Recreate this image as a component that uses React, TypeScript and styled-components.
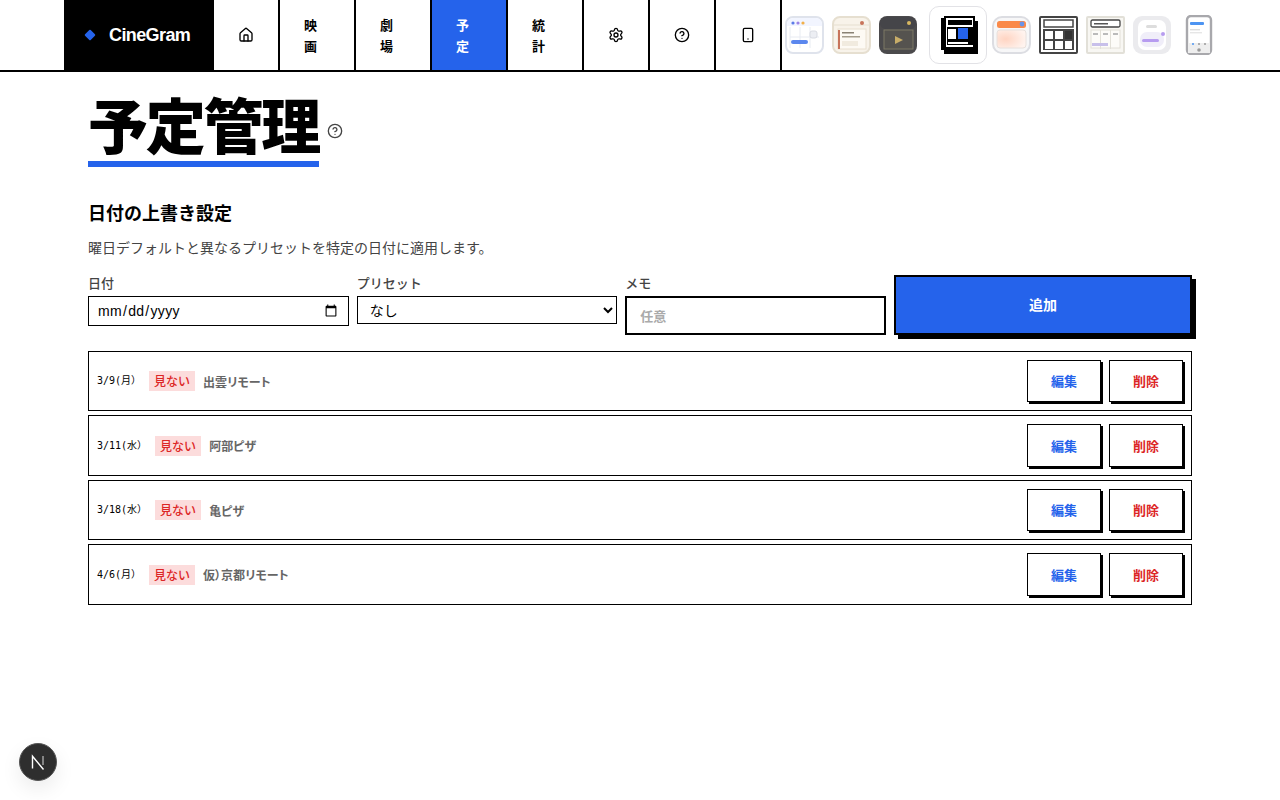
import React from "react";
import styled, { createGlobalStyle } from "styled-components";
import { House, Settings, CircleHelp, Smartphone } from "lucide-react";

const Global = createGlobalStyle`
  * { box-sizing: border-box; }
  html, body { margin: 0; padding: 0; background: #fff; }
  body { font-family: "Liberation Sans", "Noto Sans CJK JP", sans-serif; color: #000; }
`;

const Page = styled.div`
  width: 1280px;
  height: 800px;
  overflow: hidden;
  position: relative;
`;

const Header = styled.header`
  height: 72px;
  border-bottom: 2px solid #000;
`;

const HeaderInner = styled.div`
  width: 1152px;
  height: 70px;
  margin: 0 auto;
  display: flex;
`;

const Logo = styled.div`
  flex: none;
  width: 150px;
  background: #000;
  color: #fff;
  display: flex;
  align-items: center;
  padding-left: 22px;
  gap: 15px;
  font-size: 18px;
  font-weight: 700;
  letter-spacing: -0.6px;
`;

const Diamond = styled.span`
  width: 8px;
  height: 8px;
  background: #2563eb;
  transform: rotate(45deg);
  border-radius: 1px;
`;

const NavItem = styled.a<{ $active?: boolean; $icon?: boolean }>`
  flex: none;
  display: flex;
  align-items: center;
  padding: 0 24px;
  border-right: 2px solid #000;
  font-family: "Noto Sans CJK JP", sans-serif;
  font-size: 13px;
  font-weight: 700;
  line-height: 21px;
  letter-spacing: 0.65px;
  background: ${(p) => (p.$active ? "#2563eb" : "#fff")};
  color: ${(p) => (p.$active ? "#fff" : "#000")};
  width: ${(p) => (p.$icon ? "66px" : "76px")};
`;

const Themes = styled.div`
  flex: none;
  display: flex;
  align-items: center;
  padding-left: 3px;
`;

const ThemeSlot = styled.div<{ $active?: boolean }>`
  flex: none;
  width: ${(p) => (p.$active ? "58px" : "40px")};
  height: ${(p) => (p.$active ? "58px" : "40px")};
  margin: ${(p) => (p.$active ? "0 5px 0 3px" : "0 7px 0 0")};
  display: flex;
  align-items: center;
  justify-content: center;
  border-radius: 10px;
  border: ${(p) => (p.$active ? "1px solid #e2e2e6" : "none")};
`;

const Main = styled.main`
  width: 1104px;
  margin: 0 auto;
  padding-top: 20px;
`;

const TitleRow = styled.div`
  display: flex;
  align-items: center;
  gap: 8px;
  margin-bottom: 31px;
  color: #444;
`;

const Title = styled.h1`
  margin: 0;
  padding-bottom: 8px;
  font-family: "Noto Sans CJK JP", sans-serif;
  font-weight: 900;
  font-size: 60px;
  line-height: 61px;
  letter-spacing: -2.25px;
  color: #000;
  border-bottom: 6px solid #2563eb;
`;

const TitleHelp = styled(CircleHelp)`
  margin-top: 3px;
`;

const SectionTitle = styled.h2`
  margin: 0 0 11px;
  font-family: "Noto Sans CJK JP", sans-serif;
  font-size: 18px;
  font-weight: 700;
  line-height: 28px;
`;

const Description = styled.p`
  margin: 0 0 17px;
  font-family: "Noto Sans CJK JP", sans-serif;
  font-size: 14px;
  line-height: 20px;
  color: #444;
`;

const FormGrid = styled.div`
  display: grid;
  grid-template-columns: repeat(3, 1fr) 298px;
  gap: 8px;
  align-items: start;
  margin-bottom: 15.75px;
`;

const Field = styled.label`
  display: flex;
  flex-direction: column;
  gap: 5px;
`;

const FieldLabel = styled.span`
  font-family: "Noto Sans CJK JP", sans-serif;
  font-size: 13px;
  font-weight: 500;
  line-height: 17px;
  color: #444;
`;

const DateInput = styled.input`
  height: 30px;
  width: 100%;
  padding: 0 8px;
  border: 1px solid #000;
  border-radius: 0;
  background: #fff;
  font-family: "Liberation Sans", sans-serif;
  font-size: 14px;
  letter-spacing: 0.3px;
  color: #000;
`;

const SelectInput = styled.select`
  height: 28px;
  width: 100%;
  padding: 0 8px;
  border: 1px solid #000;
  border-radius: 0;
  background: #fff;
  font-family: "Noto Sans CJK JP", sans-serif;
  font-size: 14px;
  color: #000;
`;

const MemoInput = styled.input`
  height: 39px;
  width: 100%;
  padding: 0 13px;
  border: 2px solid #000;
  border-radius: 0;
  outline: none;
  font-family: "Noto Sans CJK JP", sans-serif;
  font-size: 13px;
  font-weight: 700;
  &::placeholder { color: #aaa; }
`;

const AddButton = styled.button`
  height: 60px;
  margin-top: 1px;
  padding: 0 0 2px;
  border: 2px solid #000;
  background: #2563eb;
  color: #fff;
  box-shadow: 4px 4px 0 #000;
  font-family: "Noto Sans CJK JP", sans-serif;
  font-size: 14px;
  font-weight: 700;
`;

const List = styled.div`
  display: flex;
  flex-direction: column;
  gap: 4px;
`;

const Row = styled.div`
  height: 60.5px;
  border: 1px solid #000;
  padding: 0 8px;
  display: flex;
  align-items: center;
  justify-content: space-between;
`;

const RowInfo = styled.div`
  display: flex;
  align-items: center;
  gap: 8px;
`;

const DateText = styled.span`
  font-family: "DejaVu Sans Mono", "Noto Sans CJK JP", monospace;
  font-size: 10px;
  line-height: 16px;
`;

const Badge = styled.span`
  background: #fcdcdc;
  color: #dc2626;
  height: 20px;
  padding: 0 5px;
  font-family: "Noto Sans CJK JP", sans-serif;
  font-size: 12px;
  font-weight: 500;
  line-height: 20px;
`;

const Preset = styled.span`
  font-family: "Noto Sans CJK JP", sans-serif;
  font-size: 12px;
  font-weight: 700;
  font-feature-settings: "palt";
  color: #666;
`;

const Actions = styled.div`
  display: flex;
  gap: 8px;
`;

const ActionButton = styled.button<{ $tone: string }>`
  width: 74px;
  height: 42.5px;
  padding: 0 0 1px;
  border: 1px solid #000;
  background: #fff;
  box-shadow: 2px 2px 0 #000;
  color: ${(p) => p.$tone};
  font-family: "Noto Sans CJK JP", sans-serif;
  font-size: 13px;
  font-weight: 700;
`;

const DevBadge = styled.div`
  position: absolute;
  left: 19px;
  top: 743px;
  width: 38px;
  height: 38px;
  border-radius: 50%;
  background: #2e2e2e;
  border: 1px solid #555;
  box-shadow: 0 8px 20px rgba(0, 0, 0, 0.08);
  display: flex;
  align-items: center;
  justify-content: center;
`;

const Icon1 = () => (
  <svg width="40" height="40" viewBox="0 0 40 40">
    <rect x="1" y="2" width="37" height="36" rx="7" fill="#fff" stroke="#dfe3ec" strokeWidth="2" />
    <path d="M2 9a6 6 0 0 1 6-6h23a6 6 0 0 1 6 6v2H2z" fill="#f2f5ff" />
    <circle cx="8" cy="8" r="1.6" fill="#5b7be8" />
    <circle cx="13" cy="8" r="1.6" fill="#9b83e6" />
    <circle cx="18" cy="8" r="1.6" fill="#f2b04a" />
    <path d="M5 12v21M15 12v21M25 12v21M5 22h29" stroke="#e8ebf2" strokeWidth="1" />
    <rect x="25" y="16" width="7" height="7" rx="2" fill="#eceef3" stroke="#d8dbe2" />
    <rect x="6" y="25" width="17" height="4" rx="2" fill="#5b87ee" />
  </svg>
);

const Icon2 = () => (
  <svg width="40" height="40" viewBox="0 0 40 40">
    <rect x="1" y="2" width="37" height="36" rx="7" fill="#f8f3ea" stroke="#e6dfd0" strokeWidth="2" />
    <path d="M2 10h35" stroke="#e6dfd0" />
    <circle cx="30" cy="8" r="2" fill="#c8745a" />
    <rect x="6" y="14" width="28" height="20" fill="#fdfaf4" stroke="#e8e0d0" />
    <rect x="6" y="15" width="2" height="19" fill="#c8745a" />
    <rect x="10" y="17" width="12" height="1.5" fill="#8a8274" />
    <rect x="10" y="21" width="18" height="1.5" fill="#a69e8e" />
    <rect x="10" y="26" width="16" height="5" fill="#f1ebdf" />
  </svg>
);

const Icon3 = () => (
  <svg width="40" height="40" viewBox="0 0 40 40">
    <rect x="0" y="1" width="38" height="38" rx="8" fill="#4b4a4c" />
    <rect x="1" y="2" width="36" height="12" rx="6" fill="#454549" />
    <circle cx="30" cy="8" r="2" fill="#d8b860" />
    <rect x="5" y="15" width="29" height="19" fill="#55534f" stroke="#7d7865" />
    <path d="M16 21l8 4-8 4z" fill="#c8ad68" />
  </svg>
);

const Icon4 = () => (
  <svg width="40" height="40" viewBox="0 0 40 40">
    <rect x="3" y="3" width="32" height="32" fill="#000" />
    <rect x="6" y="6" width="34" height="33" fill="#000" />
    <rect x="6" y="1" width="31" height="33" fill="#000" />
    <rect x="8" y="3" width="27" height="29" fill="#fff" />
    <rect x="10" y="5" width="24" height="5" fill="#000" />
    <rect x="10" y="10" width="24" height="2" fill="#fff" />
    <rect x="9" y="12" width="26" height="18" fill="#000" />
    <rect x="10" y="14" width="8" height="10" fill="#fff" />
    <rect x="20" y="13" width="10" height="11" fill="#2563eb" />
    <rect x="10" y="27" width="20" height="2" fill="#fff" />
  </svg>
);

const Icon5 = () => (
  <svg width="40" height="40" viewBox="0 0 40 40">
    <defs>
      <radialGradient id="peach" cx="30%" cy="50%" r="70%">
        <stop offset="0%" stopColor="#ffd4c2" />
        <stop offset="100%" stopColor="#fff3ee" />
      </radialGradient>
    </defs>
    <rect x="1" y="2" width="37" height="36" rx="9" fill="#f7f7f8" stroke="#dcdde2" strokeWidth="2" />
    <rect x="5" y="6" width="29" height="7" rx="2.5" fill="#fa8a4a" />
    <circle cx="30" cy="9" r="2.4" fill="#6a93e8" />
    <rect x="5" y="15" width="29" height="18" rx="3" fill="url(#peach)" stroke="#e8e0dc" />
  </svg>
);

const Icon6 = () => (
  <svg width="40" height="40" viewBox="0 0 40 40">
    <rect x="1" y="2" width="37" height="36" rx="1" fill="#fff" stroke="#444" strokeWidth="2" />
    <rect x="5" y="5" width="29" height="7" fill="#fff" stroke="#444" strokeWidth="1.5" />
    <rect x="4" y="14" width="31" height="21" fill="#444" />
    <rect x="6" y="16" width="8" height="8" fill="#fff" />
    <rect x="16" y="16" width="8" height="8" fill="#fff" />
    <rect x="26" y="16" width="7" height="8" fill="#333" />
    <rect x="6" y="26" width="8" height="8" fill="#fff" />
    <rect x="16" y="26" width="8" height="8" fill="#fff" />
    <rect x="26" y="26" width="7" height="8" fill="#fff" />
  </svg>
);

const Icon7 = () => (
  <svg width="40" height="40" viewBox="0 0 40 40">
    <rect x="1" y="2" width="37" height="36" rx="1" fill="#f8f7f3" stroke="#e2e0d8" strokeWidth="2" />
    <rect x="5" y="5" width="29" height="7" rx="1.5" fill="#fff" stroke="#444" strokeWidth="1.3" />
    <rect x="8" y="8" width="14" height="1.5" fill="#555" />
    <rect x="5" y="15" width="29" height="18" fill="#fdfcf9" stroke="#e2e0d8" />
    <path d="M14.5 15v19M24.5 15v19" stroke="#e2e0d8" />
    <rect x="7" y="18" width="5" height="2" fill="#bbb" />
    <rect x="17" y="18" width="5" height="2" fill="#bbb" />
    <rect x="27" y="18" width="5" height="2" fill="#bbb" />
    <rect x="6" y="28" width="16" height="3" fill="#c8c0ea" />
  </svg>
);

const Icon8 = () => (
  <svg width="40" height="40" viewBox="0 0 40 40">
    <rect x="0" y="1" width="38" height="38" rx="9" fill="#ebebee" />
    <rect x="5" y="5" width="28" height="30" rx="7" fill="#fff" />
    <rect x="13" y="10" width="11" height="3" rx="1.5" fill="#ddd" />
    <rect x="7" y="17" width="24" height="15" rx="7" fill="#f0eef9" />
    <rect x="9" y="24" width="17" height="3" rx="1.5" fill="#b79cf0" />
    <circle cx="30" cy="19" r="2" fill="#b79cf0" />
  </svg>
);

const Icon9 = () => (
  <svg width="40" height="40" viewBox="0 0 40 40">
    <rect x="7" y="1" width="24" height="38" rx="4" fill="#fff" stroke="#a8a8ac" strokeWidth="2.4" />
    <rect x="10" y="7" width="14" height="3" rx="1" fill="#4d94f2" />
    <rect x="10" y="14" width="10" height="1.4" fill="#ddd" />
    <rect x="10" y="17" width="12" height="1.4" fill="#e6e6e6" />
    <rect x="8" y="28" width="22" height="10" fill="#eee" />
    <circle cx="13" cy="29" r="1" fill="#4d94f2" />
    <circle cx="19" cy="29" r="1" fill="#999" />
    <circle cx="25" cy="29" r="1" fill="#999" />
    <circle cx="19" cy="35" r="1.8" fill="#999" />
  </svg>
);

const themes = [Icon1, Icon2, Icon3, Icon4, Icon5, Icon6, Icon7, Icon8, Icon9];

const rows = [
  { date: "3/9(月）", preset: "出雲リモート" },
  { date: "3/11(水）", preset: "阿部ピザ" },
  { date: "3/18(水）", preset: "亀ピザ" },
  { date: "4/6(月）", preset: "仮）京都リモート" },
];

export default function App() {
  return (
    <Page>
      <Global />
      <Header>
        <HeaderInner>
          <Logo>
            <Diamond />
            CineGram
          </Logo>
          <NavItem $icon><House size={16} /></NavItem>
          <NavItem>映画</NavItem>
          <NavItem>劇場</NavItem>
          <NavItem $active>予定</NavItem>
          <NavItem>統計</NavItem>
          <NavItem $icon><Settings size={16} /></NavItem>
          <NavItem $icon><CircleHelp size={16} /></NavItem>
          <NavItem $icon><Smartphone size={16} /></NavItem>
          <Themes>
            {themes.map((T, i) => (
              <ThemeSlot key={i} $active={i === 3}>
                <T />
              </ThemeSlot>
            ))}
          </Themes>
        </HeaderInner>
      </Header>
      <Main>
        <TitleRow>
          <Title>予定管理</Title>
          <TitleHelp size={16} />
        </TitleRow>
        <SectionTitle>日付の上書き設定</SectionTitle>
        <Description>曜日デフォルトと異なるプリセットを特定の日付に適用します。</Description>
        <FormGrid>
          <Field>
            <FieldLabel>日付</FieldLabel>
            <DateInput type="date" />
          </Field>
          <Field>
            <FieldLabel>プリセット</FieldLabel>
            <SelectInput defaultValue="none">
              <option value="none">なし</option>
            </SelectInput>
          </Field>
          <Field>
            <FieldLabel>メモ</FieldLabel>
            <MemoInput placeholder="任意" />
          </Field>
          <AddButton>追加</AddButton>
        </FormGrid>
        <List>
          {rows.map((r) => (
            <Row key={r.date}>
              <RowInfo>
                <DateText>{r.date}</DateText>
                <Badge>見ない</Badge>
                <Preset>{r.preset}</Preset>
              </RowInfo>
              <Actions>
                <ActionButton $tone="#2563eb">編集</ActionButton>
                <ActionButton $tone="#dc2626">削除</ActionButton>
              </Actions>
            </Row>
          ))}
        </List>
      </Main>
      <DevBadge>
        <svg width="18" height="18" viewBox="0 0 18 18" fill="none">
          <path d="M3.5 15.5V3.2L14.5 16.5" stroke="#fff" strokeWidth="1.4" />
          <path d="M14 3v9" stroke="#aaa" strokeWidth="1.4" />
        </svg>
      </DevBadge>
    </Page>
  );
}
